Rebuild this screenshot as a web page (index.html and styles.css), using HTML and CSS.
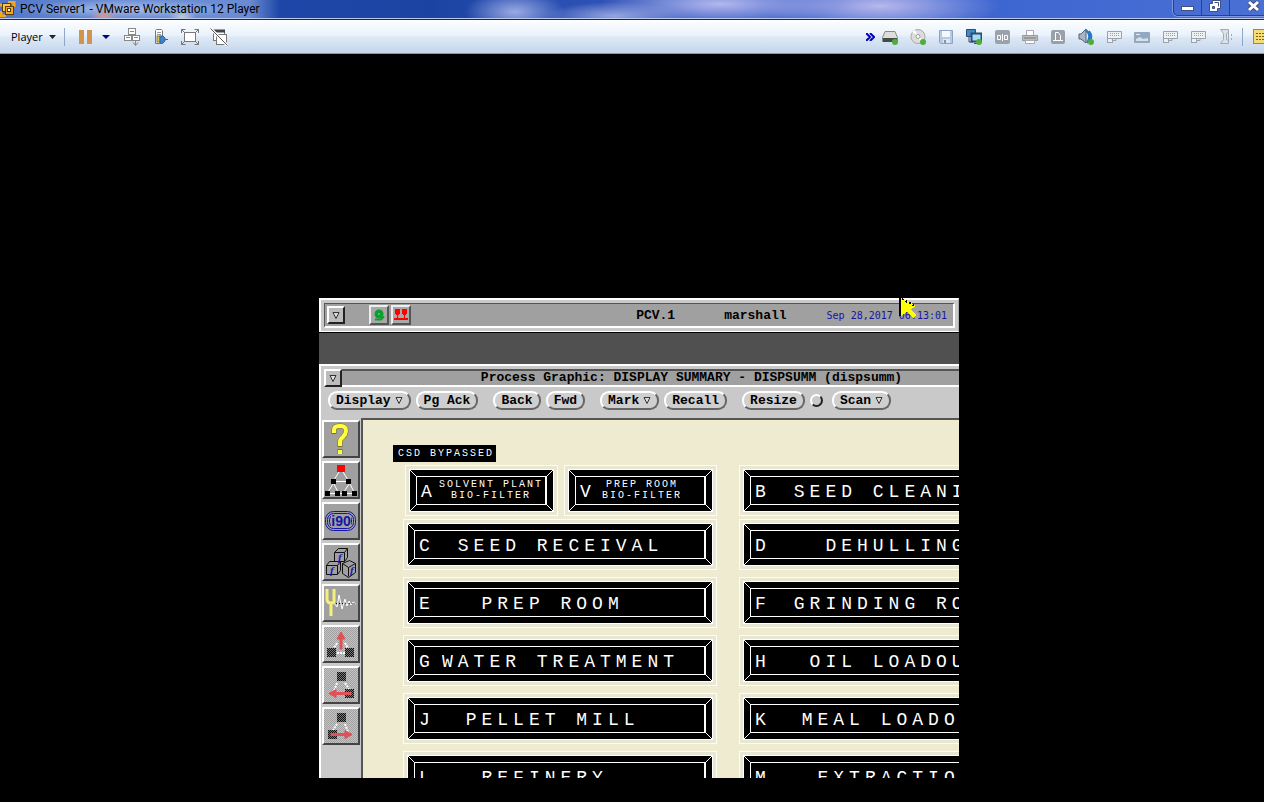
FILE: index.html
```html
<!DOCTYPE html>
<html lang="en">
<head>
    <meta charset="UTF-8">
    <meta name="viewport" content="width=device-width, initial-scale=1.0">
    <title>PCV Server1 - VMware Workstation 12 Player</title>

    <link rel="stylesheet" href="styles.css">
</head>
<body>

<header class="title-bar">
    <svg class="app-icon" width="16" height="16" viewBox="0 0 16 16">
        <path d="M8 1h6v5M1 10v5h5M0 4h4" fill="none" stroke="#f6a81c" stroke-width="3"/>
        <rect x="2.500" y="2.500" width="8" height="8" fill="#fcc544" stroke="#5c3c08"/>
        <rect x="5.500" y="5.500" width="8" height="8" fill="#f6a81c" stroke="#5c3c08"/>
        <rect x="7.500" y="7.500" width="3" height="3" fill="#fff" stroke="#5c3c08"/>
    </svg>
    <h1 class="title">PCV Server1 - VMware Workstation 12 Player</h1>
    <div class="window-controls">
        <button type="button" class="win-min" aria-label="Minimize">
            <svg width="13" height="12" viewBox="0 0 13 12"><rect x=".5" y="6.500" width="12" height="4" fill="#fff" stroke="#41507c"/></svg>
        </button>
        <button type="button" class="win-restore" aria-label="Restore">
            <svg width="13" height="12" viewBox="0 0 13 12"><path d="M3.500 .5h8v8h-3v3h-8v-8h3z" fill="#fff" stroke="#41507c"/><path d="M3.500 6.500h2v2h-2z" fill="#5876c4" stroke="#41507c"/><path d="M5.500 2.500h4v4" fill="none" stroke="#41507c"/></svg>
        </button>
        <button type="button" class="win-close" aria-label="Close">
            <svg width="13" height="12" viewBox="0 0 13 12"><path d="M2 2l9 8M11 2l-9 8" stroke="#41507c" stroke-width="5"/><path d="M2 2l9 8M11 2l-9 8" stroke="#fff" stroke-width="3"/></svg>
        </button>
    </div>
</header>

<nav class="toolbar">
    <div class="tools-left">
        <button type="button" class="player-menu">Player
            <svg width="7" height="4" viewBox="0 0 7 4"><path d="M0 0h7l-3.500 4z" fill="#222"/></svg>
        </button>
        <span class="sep"></span>
        <button type="button" class="pause" aria-label="Suspend">
            <svg width="13" height="14" viewBox="0 0 13 14"><path d="M0 0h5v14h-5zM8 0h5v14h-5z" fill="#d2944a"/></svg>
        </button>
        <button type="button" class="pause-menu" aria-label="Power options">
            <svg width="8" height="4" viewBox="0 0 8 4"><path d="M0 0h8l-4 4z" fill="#00008b"/></svg>
        </button>
        <button type="button" class="tool" aria-label="Send Ctrl+Alt+Del">
            <svg width="18" height="18" viewBox="0 0 18 18" fill="#fff" stroke="#888">
                <rect x="5.500" y=".5" width="7" height="6"/><rect x="1.500" y="7.500" width="7" height="5"/><rect x="9.500" y="7.500" width="7" height="5"/>
                <path d="M7 3.500h4M3 9.500h4M11 9.500h4M12.500 13v4M10 14.500l2.500 3 2.500-3" fill="none"/>
            </svg>
        </button>
        <button type="button" class="tool" aria-label="Manage devices">
            <svg width="18" height="18" viewBox="0 0 18 18">
                <path d="M3.500 15.500v-13l1-1h5l1 1v13z" fill="#fff" stroke="#777"/><path d="M5 4.500h4M5 6.500h4" stroke="#999"/>
                <rect x="5" y="8" width="3" height="6" fill="#d8c83c" stroke="#777" stroke-width="1"/>
                <path d="M8 8h3l2 2v3l-2 2h-3zM13 11.500h3" fill="#3f86c8" stroke="#2d68a4"/>
            </svg>
        </button>
        <button type="button" class="tool" aria-label="Full screen">
            <svg width="18" height="18" viewBox="0 0 18 18" fill="none" stroke="#777">
                <rect x="3.500" y="4.500" width="11" height="9" fill="#fff"/>
                <path d="M.5 5v-3.500h4M.5 1.500l3 3M17.500 5v-3.500h-4M17.500 1.500l-3 3M.5 13v3.500h4M.5 16.500l3-3M17.500 13v3.500h-4M17.500 16.500l-3-3"/>
            </svg>
        </button>
        <button type="button" class="tool" aria-label="Unity">
            <svg width="18" height="18" viewBox="0 0 18 18" fill="#fff" stroke="#777">
                <rect x="3.500" y="2.500" width="11" height="10"/><path d="M3 3h12" stroke="#444" stroke-width="3"/>
                <rect x="6.500" y="6.500" width="10" height="10"/>
                <path d="M.5 .5l17 17" stroke="#fff" stroke-width="3"/><path d="M.5 .5l17 17" stroke="#555"/>
            </svg>
        </button>
    </div>

    <div class="tools-right">
        <button type="button" class="collapse" aria-label="Show devices">
            <svg width="9" height="8" viewBox="0 0 9 8"><path d="M0 0l4 4-4 4M4 0l4 4-4 4" fill="none" stroke="#0000b4" stroke-width="2"/></svg>
        </button>
        <button type="button" class="tool" aria-label="Hard disk">
            <svg width="16" height="16" viewBox="0 0 16 16"><path d="M3 2.500h10l2.500 6v4h-15v-4z" fill="#ddd" stroke="#888"/><path d="M1 9h14v4H1z" fill="#444c48"/><circle cx="13" cy="13" r="3" fill="#4fae35"/></svg>
        </button>
        <button type="button" class="tool" aria-label="CD/DVD">
            <svg width="16" height="16" viewBox="0 0 16 16"><circle cx="8" cy="7.500" r="7" fill="#dcdedc" stroke="#a8a8a8"/><path d="M8 7L2 3l3-2zM8 8l6 3-3 3z" fill="#fff"/><circle cx="8" cy="7.500" r="2" fill="#fff" stroke="#999"/><circle cx="13" cy="13" r="3" fill="#4fae35"/></svg>
        </button>
        <button type="button" class="tool" aria-label="Floppy">
            <svg width="16" height="16" viewBox="0 0 16 16"><path d="M1.500 1.500h13v13h-12l-1-1z" fill="#b8cadf" stroke="#8ba4c2"/><path d="M4 2h8v6H4z" fill="#f4f8fc"/><path d="M5 10h7v4H5z" fill="#dfe7ef"/><path d="M6 11h2v3H6z" fill="#8095b0"/></svg>
        </button>
        <button type="button" class="tool" aria-label="Network adapter">
            <svg width="16" height="16" viewBox="0 0 16 16"><path d="M.5 .5h9v7h-9z" fill="#3f8cc8" stroke="#2c4c74"/><path d="M5.500 4.500h10v8h-10z" fill="#a4dbf4" stroke="#2c4c74" stroke-width="2"/><path d="M3 8v5h4M8 14.500h5" fill="none" stroke="#2c4c74"/><circle cx="13" cy="13" r="3" fill="#4fae35"/></svg>
        </button>
        <button type="button" class="tool" aria-label="Serial port">
            <svg width="16" height="16" viewBox="0 0 16 16"><rect x="1" y="1" width="15" height="14" rx="2" fill="#9aa2ab"/><path d="M3.500 6.500h3v4h-3zM10.500 6.500h3v4h-3zM8.500 5v7" fill="none" stroke="#fff"/></svg>
        </button>
        <button type="button" class="tool" aria-label="Printer">
            <svg width="16" height="16" viewBox="0 0 16 16"><path d="M4.500 1.500h7v5h-7z" fill="#fff" stroke="#aaa"/><path d="M.5 6.500h15v5H.5z" fill="#b8bcc0" stroke="#999"/><path d="M2 9h12" stroke="#777"/><path d="M3.500 11.500h9v3h-9z" fill="#fff" stroke="#aaa"/></svg>
        </button>
        <button type="button" class="tool" aria-label="Shared device">
            <svg width="16" height="16" viewBox="0 0 16 16"><rect x="1" y="1" width="14" height="14" rx="2" fill="#98a0aa"/><path d="M5.500 11.500v-8h3l2 3v5zM3 11.500h10" fill="none" stroke="#fff"/></svg>
        </button>
        <button type="button" class="tool" aria-label="Sound card">
            <svg width="16" height="16" viewBox="0 0 16 16"><path d="M1 5h2l5-5v14l-5-4H1z" fill="#a8b6c4" stroke="#526272"/><path d="M8 1q6 6 1 13M11 2q4 5 1 9" fill="none" stroke="#2878c4" stroke-width="2"/><circle cx="13" cy="13" r="3" fill="#4fae35"/></svg>
        </button>
        <button type="button" class="tool" aria-label="USB device 1">
            <svg width="16" height="16" viewBox="0 0 16 16"><use href="#usb"/></svg>
        </button>
        <button type="button" class="tool" aria-label="Display">
            <svg width="16" height="16" viewBox="0 0 16 16"><rect x="0" y="3" width="16" height="11" rx="1" fill="#93a9c2"/><path d="M2 12v-2l4-2 3 2 5-1v3z" fill="#d5e0ea"/><path d="M2 5h4v1H2z" fill="#e5edf4"/></svg>
        </button>
        <button type="button" class="tool" aria-label="USB device 2">
            <svg width="16" height="16" viewBox="0 0 16 16"><use href="#usb"/></svg>
        </button>
        <button type="button" class="tool" aria-label="USB device 3">
            <svg width="16" height="16" viewBox="0 0 16 16"><use href="#usb"/></svg>
        </button>
        <button type="button" class="tool" aria-label="Bluetooth">
            <svg width="16" height="16" viewBox="0 0 16 16"><path d="M2.500 .5h8v3l-2 1v6l2 1v3h-8l3-4v-6z" fill="#dde2e8" stroke="#a2abb5"/><path d="M10.500 3v11M13.500 5v2M13.500 9v2" stroke="#a2abb5"/></svg>
        </button>
        <span class="sep"></span>
        <button type="button" class="tool notes" aria-label="Messages">
            <svg width="16" height="16" viewBox="0 0 16 16"><rect x=".5" y=".5" width="15" height="14" fill="#f6dc74" stroke="#a88a24"/><path d="M3 4.500h10M3 7.500h10M3 10.500h10" stroke="#7c6414" stroke-dasharray="2 1"/></svg>
        </button>
    </div>
</nav>

<!-- shared symbols -->
<svg class="defs" width="0" height="0">
    <defs>
        <g id="usb"><path d="M1.500 2.500h14v7h-14z" fill="#eef1f4" stroke="#9aa2ac"/><path d="M4 4.500h10M4 6.500h10" stroke="#9aa2ac" stroke-dasharray="1 1"/><path d="M1.500 9v4" stroke="#9aa2ac"/><rect x="1.500" y="9.500" width="5" height="4" fill="#eef1f4" stroke="#9aa2ac"/><path d="M7 11.500h3v-2" fill="none" stroke="#9aa2ac"/></g>
        <pattern id="dots" width="2" height="2" patternUnits="userSpaceOnUse">
            <path d="M0 0h1v1h-1zM1 1h1v1h-1z" fill="#111"/>
        </pattern>
        <pattern id="mesh" width="2" height="2" patternUnits="userSpaceOnUse">
            <path d="M0 0h1v1h-1zM1 1h1v1h-1z" fill="#c4c4c4"/>
        </pattern>
        <g id="node"><rect width="9" height="9" fill="#777"/><rect width="9" height="9" fill="url(#dots)"/></g>
    </defs>
</svg>

<main class="stage">
    <div class="guest">
        <section class="status-window">
            <div class="status-bar">
                <button type="button" class="window-menu" aria-label="Window menu">
                    <svg width="8" height="7" viewBox="0 0 8 7"><path d="M1 .5h6l-3 6z" fill="#ddd" stroke="#333"/></svg>
                </button>
                <div class="alarms">
                    <button type="button" class="alarm" aria-label="Alarm horn">
                        <svg width="12" height="12" viewBox="0 0 12 12"><circle cx="6" cy="5" r="4.500" fill="#0aa02c"/><path d="M2 10.500h6l3-3" fill="none" stroke="#0aa02c" stroke-width="2"/><circle cx="6" cy="5" r="1" fill="#a0a0a0"/></svg>
                    </button>
                    <button type="button" class="alarm" aria-label="Alarm summary">
                        <svg width="14" height="12" viewBox="0 0 14 12" fill="#f00" shape-rendering="crispEdges"><path d="M1 0h5v5H5v1H4v3H3V6H2V5H1zM8 0h5v5h-1v1h-1v3h-1V6H9V5H8zM0 9h14v2H0z"/></svg>
                    </button>
                </div>
                <div class="station">
                    <span class="host">PCV.1</span>
                    <span class="user">marshall</span>
                    <time class="clock">Sep 28,2017 06:13:01</time>
                </div>
            </div>
        </section>

        <div class="backdrop"></div>

        <section class="graphic-window">
            <div class="graphic-title">
                <button type="button" class="window-menu" aria-label="Window menu">
                    <svg width="8" height="7" viewBox="0 0 8 7"><path d="M1 .5h6l-3 6z" fill="#ddd" stroke="#333"/></svg>
                </button>
                <h2>Process Graphic: DISPLAY SUMMARY - DISPSUMM (dispsumm)</h2>
            </div>

            <div class="menu-row">
                <div class="menu-group">
                    <button type="button" class="pill">Display<svg width="8" height="7" viewBox="0 0 8 7"><path d="M1 .5h6l-3 6z" fill="#ddd" stroke="#333"/></svg></button>
                    <button type="button" class="pill">Pg Ack</button>
                </div>
                <div class="menu-group">
                    <button type="button" class="pill">Back</button>
                    <button type="button" class="pill">Fwd</button>
                </div>
                <div class="menu-group">
                    <button type="button" class="pill">Mark<svg width="8" height="7" viewBox="0 0 8 7"><path d="M1 .5h6l-3 6z" fill="#ddd" stroke="#333"/></svg></button>
                    <button type="button" class="pill">Recall</button>
                </div>
                <div class="menu-group">
                    <button type="button" class="pill">Resize</button>
                    <input type="radio" class="lamp" aria-label="Resize lock">
                    <button type="button" class="pill scan">Scan<svg width="8" height="7" viewBox="0 0 8 7"><path d="M1 .5h6l-3 6z" fill="#ddd" stroke="#333"/></svg></button>
                </div>
            </div>

            <div class="workspace">
                <div class="side-bar">
                    <button type="button" class="side-button" aria-label="Help">
                        <svg width="36" height="36" viewBox="0 0 36 36">
                            <g fill="none" stroke="#77722a" stroke-width="5"><path d="M11 13v-4q0-4 5-4h2q5 0 5 5 0 3-3 6-3 2-3 5v5"/><path d="M17 28v5"/></g>
                            <g fill="none" stroke="#ffff3c" stroke-width="4"><path d="M11 12v-3q0-4 5-4h2q5 0 5 5 0 3-3 6-3 2-3 5v4"/><path d="M17 29v4"/></g>
                        </svg>
                    </button>
                    <button type="button" class="side-button" aria-label="Display tree">
                        <svg width="36" height="36" viewBox="0 0 36 36">
                            <g stroke="#fff" fill="none"><path d="M16 10l-5 8M20 10l5 8M13 19.500h10M10 22l-5 8M11 22l4 8M26 22l-5 8M27 22l4 8M7 31.500h22"/></g>
                            <rect x="14" y="3" width="8" height="7" fill="#f00"/>
                            <path d="M8 17h5v5H8zM23 17h5v5h-5zM2 29h5v5H2zM12 29h5v5h-5zM19 29h5v5h-5zM29 29h5v5h-5z"/>
                        </svg>
                    </button>
                    <button type="button" class="side-button" aria-label="i90">
                        <svg width="36" height="36" viewBox="0 0 36 36">
                            <g fill="none" stroke="#1414a8"><rect x="2.500" y="8.500" width="30" height="19" rx="8"/><rect x="4.500" y="10.500" width="26" height="15" rx="6"/><rect x="6.500" y="12.500" width="22" height="11" rx="4"/></g>
                            <rect x="8" y="12" width="20" height="12" fill="#a0a0a0"/>
                            <text class="i90" x="18" y="23" text-anchor="middle">i90</text>
                        </svg>
                    </button>
                    <button type="button" class="side-button" aria-label="Functions">
                        <svg width="36" height="36" viewBox="0 0 36 36">
                            <g fill="#a0a0a0" stroke="#111">
                                <path d="M11.500 8.500l4-4h9v9l-3 4h-10zM11.500 8.500h10v9M21.500 8.500l3-4"/>
                                <path d="M3.500 21.500l3-4h11v9l-3 4h-11zM3.500 21.500h11v9M14.500 21.500l3-4"/>
                                <path d="M19.500 19.500l7-3 6 3v9l-7 5-6-4zM19.500 19.500l6 4 7-4M25.500 23.500v9"/>
                            </g>
                            <text class="func" x="15" y="17">f</text><text class="func" x="7" y="30">f</text><text class="func" x="27" y="30">f</text>
                        </svg>
                    </button>
                    <button type="button" class="side-button" aria-label="Tuning">
                        <svg width="36" height="36" viewBox="0 0 36 36">
                            <path d="M10 18.500h24" stroke="#111" stroke-dasharray="2 1"/>
                            <path d="M11 18l3 4 2-12 3 14 3-10 2 7 2-5 2 4 2-3 3 2" fill="none" stroke="#fff"/>
                            <path d="M4 4v10q0 4 4 4t3-4v-10M8 18v13" fill="none" stroke="#f4f078" stroke-width="3"/>
                        </svg>
                    </button>
                    <button type="button" class="side-button" aria-label="Parent display" disabled>
                        <svg width="36" height="36" viewBox="0 0 36 36">
                            <rect width="36" height="36" fill="url(#mesh)"/>
                            <path d="M14 17l-4 7M22 17l4 7M14 27h8" stroke="#fff" stroke-width="2" stroke-dasharray="2 1"/>
                            <use href="#node" x="4" y="22"/><use href="#node" x="22" y="22"/>
                            <path d="M17 23V13h-3l4-7 4 7h-3v10z" fill="#e05058" stroke="#e05058"/>
                        </svg>
                    </button>
                    <button type="button" class="side-button" aria-label="Previous display" disabled>
                        <svg width="36" height="36" viewBox="0 0 36 36">
                            <rect width="36" height="36" fill="url(#mesh)"/>
                            <path d="M14 16l-3 8M22 16l4 6" stroke="#fff" stroke-width="2" stroke-dasharray="2 1"/>
                            <use href="#node" x="14" y="5"/><use href="#node" x="22" y="22"/>
                            <path d="M28 25.500H13v-3l-7 4 7 4v-3h15z" fill="#e05058" stroke="#e05058"/>
                        </svg>
                    </button>
                    <button type="button" class="side-button" aria-label="Next display" disabled>
                        <svg width="36" height="36" viewBox="0 0 36 36">
                            <rect width="36" height="36" fill="url(#mesh)"/>
                            <path d="M14 16l-4 6M22 16l3 8" stroke="#fff" stroke-width="2" stroke-dasharray="2 1"/>
                            <use href="#node" x="14" y="5"/><use href="#node" x="5" y="22"/>
                            <path d="M8 25.500h14v-3l7 4-7 4v-3H8z" fill="#e05058" stroke="#e05058"/>
                        </svg>
                    </button>
                </div>

                <div class="canvas">
                    <p class="bypass">CSD BYPASSED</p>
                    <div class="displays">
                        <div class="split">
                            <button type="button" class="key"><span class="plate"><span class="face"><span class="letter">A</span><span class="small">SOLVENT PLANT<br>BIO-FILTER</span></span></span></button>
                            <button type="button" class="key"><span class="plate"><span class="face"><span class="letter">V</span><span class="small">PREP ROOM&nbsp;&nbsp;<br>BIO-FILTER&nbsp;&nbsp;</span></span></span></button>
                        </div>
                        <button type="button" class="key"><span class="plate"><span class="face"><span class="letter">B</span><span class="name">SEED CLEANING</span></span></span></button>
                        <button type="button" class="key"><span class="plate"><span class="face"><span class="letter">C</span><span class="name">SEED RECEIVAL</span></span></span></button>
                        <button type="button" class="key"><span class="plate"><span class="face"><span class="letter">D</span><span class="name">DEHULLING</span></span></span></button>
                        <button type="button" class="key"><span class="plate"><span class="face"><span class="letter">E</span><span class="name">PREP ROOM&nbsp;</span></span></span></button>
                        <button type="button" class="key"><span class="plate"><span class="face"><span class="letter">F</span><span class="name">GRINDING ROOM</span></span></span></button>
                        <button type="button" class="key"><span class="plate"><span class="face"><span class="letter">G</span><span class="name">WATER TREATMENT</span></span></span></button>
                        <button type="button" class="key"><span class="plate"><span class="face"><span class="letter">H</span><span class="name">OIL LOADOUT</span></span></span></button>
                        <button type="button" class="key"><span class="plate"><span class="face"><span class="letter">J</span><span class="name">PELLET MILL&nbsp;</span></span></span></button>
                        <button type="button" class="key"><span class="plate"><span class="face"><span class="letter">K</span><span class="name">MEAL LOADOUT</span></span></span></button>
                        <button type="button" class="key"><span class="plate"><span class="face"><span class="letter">L</span><span class="name">REFINERY&nbsp;&nbsp;</span></span></span></button>
                        <button type="button" class="key"><span class="plate"><span class="face"><span class="letter">M</span><span class="name">EXTRACTION</span></span></span></button>
                    </div>
                </div>
            </div>
        </section>

        <svg class="pointer" width="18" height="20" viewBox="0 0 18 20" shape-rendering="crispEdges">
            <path d="M0 0h2l14 7v2l-4 2 5 6-3 3-6-6-6 4H0z" fill="#ff0"/>
            <path d="M1 0v18" stroke="#000" stroke-width="2"/>
            <path d="M3 1l13 7" stroke="#000" stroke-width="2" stroke-dasharray="2 2"/>
        </svg>
    </div>
</main>

</body>
</html>
```
FILE: styles.css
```css
/* Basic styling */
* {
    box-sizing: border-box;
}
body {
    margin: 0;
    height: 100vh;
    display: flex;
    flex-direction: column;
    overflow: hidden;
    background-color: #000;
    font-family: "Open Sans", "Noto Sans", sans-serif;
    font-size: 12px;
}
button {
    margin: 0;
    padding: 0;
    border: none;
    background: none;
    color: inherit;
    font: inherit;
}
svg {
    display: block;
    flex: none;
}
h1, h2, p {
    margin: 0;
    font-size: inherit;
    font-weight: inherit;
}
.defs {
    position: absolute;
}

/* Host window title */
.title-bar {
    flex: none;
    display: flex;
    align-items: flex-start;
    height: 20px;
    border-bottom: 1px solid #15255e;
    box-shadow: inset 0 -1px #b9c8ee;
    background:
        radial-gradient(ellipse 14px 8px at 104px 17px, #d79a8a, transparent),
        radial-gradient(ellipse 14px 8px at 182px 17px, #c4cad0, transparent),
        radial-gradient(ellipse 120px 9px at 130px 9px, #a4bce8, transparent),
        radial-gradient(ellipse 50px 22px at 515px 12px, #9aaae4, transparent),
        radial-gradient(ellipse 70px 14px at 615px 16px, #98a6e0, transparent),
        radial-gradient(ellipse 120px 22px at 720px 4px, #b4b8ee, transparent),
        radial-gradient(ellipse 120px 26px at 880px 6px, #b8b8ec, transparent),
        linear-gradient(to right, #4f76c8 0, #6f90d6 120px, #6a8bd2 250px, #1d46a8 280px, #1b44a2 430px, #2c50b4 580px, #3c62cc 850px, #3e66d0 1000px, #4a70d4);
}
.app-icon {
    margin-top: 1px;
}
.title {
    flex: 1;
    padding-left: 4px;
    font-family: Roboto, "Open Sans", sans-serif;
    line-height: 18px;
    white-space: nowrap;
}
.window-controls {
    flex: none;
    display: flex;
    height: 16px;
    margin-right: -13px;
    border: 1px solid #27418a;
    border-top: none;
    border-radius: 0 0 5px 5px;
    box-shadow: 0 0 0 1px #7d98e0;
}
.window-controls button {
    display: flex;
    justify-content: center;
    width: 28px;
    border-right: 1px solid #27418a;
}
.window-controls .win-close {
    width: 46px;
    border: none;
}

/* Host toolbar */
.toolbar {
    flex: none;
    display: flex;
    justify-content: space-between;
    height: 34px;
    overflow: hidden;
    border-bottom: 1px solid #8296b4;
    background: linear-gradient(#fdfeff, #eaf2fb 45%, #dbe7f5 55%, #c4d6ec);
}
.tools-left,
.tools-right {
    display: flex;
    align-items: center;
}
.tools-right {
    margin-right: -11px;
}
.player-menu {
    display: flex;
    align-items: center;
    gap: 6px;
    padding: 0 8px 0 11px;
    font-size: 11px;
}
.sep {
    width: 1px;
    height: 18px;
    margin: 0 4px 0 2px;
    background-color: #8ea6c8;
}
.tools-left .sep {
    margin: 0 14px 0 0;
}
.pause-menu {
    padding: 0 8px 0 10px;
}
.collapse {
    padding: 0 1px;
}
.tool {
    display: flex;
    justify-content: center;
    width: 28px;
}
.tools-left .tool {
    width: 29px;
}

/* Guest screen */
.stage {
    flex: 1;
    display: flex;
    justify-content: center;
    align-items: flex-start;
    padding: 244px 0 0 14px;
}
.guest {
    position: relative;
    display: flex;
    flex-direction: column;
    width: 640px;
    height: 480px;
    overflow: hidden;
    background-color: #c9c9c9;
    color: #000;
    font-family: "Liberation Mono", "Courier New", monospace;
    font-size: 13px;
    font-weight: bold;
}
.status-window {
    flex: none;
    padding: 3px;
    border: 2px solid #fff;
    border-right-color: #aaa;
    border-right-width: 1px;
    border-bottom-width: 1px;
    box-shadow: 0 2px #000;
}
.status-bar {
    display: flex;
    align-items: center;
    height: 25px;
    padding: 0 6px 0 2px;
    border: 1px solid #555;
    border-right: 2px solid #fff;
    border-bottom: 2px solid #fff;
    background-color: #a0a0a0;
}
.window-menu {
    flex: none;
    display: flex;
    align-items: center;
    justify-content: center;
    width: 18px;
    height: 18px;
    border: 2px solid #fff;
    border-right-color: #222;
    border-bottom-color: #222;
    background-color: #bcbcbc;
}
.alarms {
    display: flex;
    gap: 2px;
    margin-left: 24px;
}
.alarm {
    display: flex;
    align-items: center;
    justify-content: center;
    width: 20px;
    height: 20px;
    border: 2px solid #eee;
    border-right-color: #555;
    border-bottom-color: #555;
    background-color: #a8a8a8;
}
.station {
    display: flex;
    align-items: center;
    margin-left: auto;
}
.user {
    margin: 0 40px 0 49px;
}
.clock {
    color: #1414a0;
    font-family: "DejaVu Sans Mono", monospace;
    font-size: 10px;
    font-weight: normal;
}
.backdrop {
    flex: none;
    height: 31px;
    margin-top: 1px;
    background-color: #505050;
}

/* Process graphic window */
.graphic-window {
    flex: 1;
    display: flex;
    flex-direction: column;
    min-height: 0;
    border-top: 2px solid #fff;
    border-left: 2px solid #fff;
}
.graphic-title {
    flex: none;
    display: flex;
    align-items: center;
    height: 18px;
    margin: 3px 0 0 3px;
    border-top: 2px solid #555;
    border-bottom: 2px solid #fff;
    background-color: #a0a0a0;
}
.graphic-title h2 {
    flex: 1;
    padding-left: 82px;
    line-height: 14px;
    text-align: center;
    white-space: nowrap;
}
.menu-row {
    flex: none;
    display: flex;
    align-items: center;
    gap: 15px;
    height: 31px;
    padding: 0 0 4px 7px;
}
.menu-group {
    display: flex;
    align-items: center;
    gap: 5px;
}
.pill {
    display: flex;
    align-items: center;
    gap: 4px;
    height: 19px;
    padding: 0 6px;
    border: 2px solid #fff;
    border-right-color: #666;
    border-bottom-color: #666;
    border-radius: 9px;
    background-color: #cfcfcf;
}
.lamp {
    appearance: none;
    width: 13px;
    height: 13px;
    margin: 0;
    border: 2px solid #fff;
    border-right-color: #222;
    border-bottom-color: #222;
    border-radius: 50%;
}
.scan {
    margin-left: 4px;
}
.workspace {
    flex: 1;
    display: flex;
    min-height: 0;
}
.side-bar {
    flex: none;
    display: flex;
    flex-direction: column;
    gap: 3px;
    padding: 2px 1px 0 1px;
}
.side-button {
    flex: none;
    width: 38px;
    height: 38px;
    border: 2px solid #fff;
    border-right-color: #444;
    border-bottom-color: #444;
    background-color: #a0a0a0;
    overflow: hidden;
}
.side-button svg {
    margin: -1px;
}
.i90 {
    fill: #1414a8;
    font-family: "Liberation Sans", Arial, sans-serif;
    font-size: 14px;
}
.func {
    fill: #1414c8;
    font-family: "Liberation Serif", serif;
    font-size: 11px;
    font-style: italic;
}

/* Display summary */
.canvas {
    flex: 1;
    min-width: 0;
    overflow: hidden;
    padding: 25px 0 0 30px;
    border-top: 2px solid #555;
    border-left: 2px solid #555;
    background-color: #eeebd0;
    color: #fff;
    font-weight: normal;
}
.bypass {
    width: max-content;
    padding: 0 2px 0 5px;
    background-color: #000;
    font-size: 10px;
    line-height: 17px;
    letter-spacing: 2px;
}
.displays {
    display: grid;
    grid-template-columns: 314px 314px;
    grid-template-rows: 47px;
    grid-auto-rows: 51px;
    gap: 7px 22px;
    margin: 3px 0 0 10px;
}
.split {
    display: flex;
    justify-content: space-between;
    padding-left: 2px;
}
.split .key {
    width: 153px;
}
.key {
    height: 51px;
    padding: 3px;
    border: 1px solid #fdfdf0;
    background-color: #e8e6d4;
    text-align: left;
}
/* mitred corners of the bevel */
.plate {
    display: block;
    height: 100%;
    padding: 6px;
    border: 1px solid #fff;
    background:
        linear-gradient(to top right, transparent 44%, #fff 44%, #fff 56%, transparent 56%) left top / 7px 7px no-repeat,
        linear-gradient(to top left, transparent 44%, #fff 44%, #fff 56%, transparent 56%) right top / 7px 7px no-repeat,
        linear-gradient(to bottom right, transparent 44%, #fff 44%, #fff 56%, transparent 56%) left bottom / 7px 7px no-repeat,
        linear-gradient(to bottom left, transparent 44%, #fff 44%, #fff 56%, transparent 56%) right bottom / 7px 7px no-repeat,
        #000;
}
.face {
    display: flex;
    align-items: center;
    height: 100%;
    padding: 3px 0 0 4px;
    border: 1px solid #fff;
    border-right-width: 2px;
    background-color: #000;
    font-size: 18px;
    line-height: 20px;
}
.letter {
    width: 16px;
}
.name {
    flex: 1;
    padding-right: 18px;
    letter-spacing: 5px;
    text-align: center;
    white-space: nowrap;
}
.small {
    flex: 1;
    padding-bottom: 5px;
    font-size: 10px;
    line-height: 11px;
    letter-spacing: 2px;
    text-align: center;
    white-space: nowrap;
}

/* Guest mouse pointer */
.pointer {
    position: absolute;
    top: 0;
    left: 580px;
}
```
